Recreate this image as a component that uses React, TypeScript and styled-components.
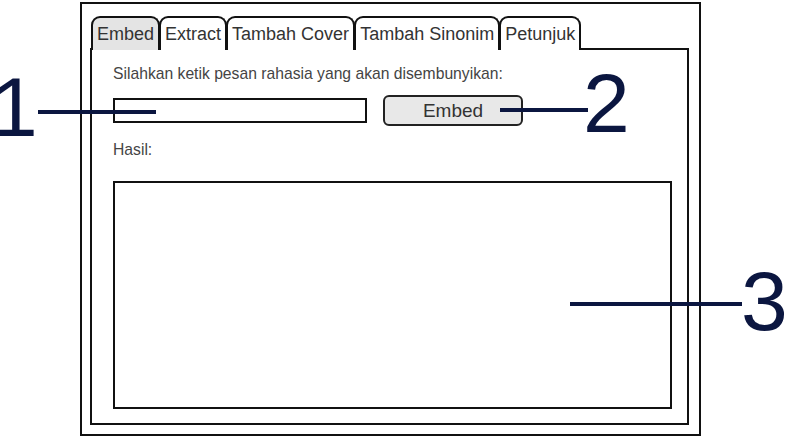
import styled, { createGlobalStyle } from "styled-components";

const ink = "#111";
const markColor = "#0b1640";
const tabs = ["Embed", "Extract", "Tambah Cover", "Tambah Sinonim", "Petunjuk"];

const GlobalStyle = createGlobalStyle`
  html, body {
    margin: 0;
    padding: 0;
    background: #fff;
    font-family: "Liberation Sans", Arial, sans-serif;
  }
`;

export default function App() {
  return (
    <Page>
      <GlobalStyle />
      <Frame>
        <TabBar>
          {tabs.map((t, i) => (
            <Tab key={t} $active={i === 0}>
              {t}
            </Tab>
          ))}
        </TabBar>
        <Panel>
          <Label>Silahkan ketik pesan rahasia yang akan disembunyikan:</Label>
          <InputRow>
            <MessageInput type="text" />
            <EmbedButton>Embed</EmbedButton>
          </InputRow>
          <ResultLabel>Hasil:</ResultLabel>
          <ResultArea />
        </Panel>
      </Frame>

      <Callout $x={38} $y={110} $w={118} />
      <Digit $x={-9} $y={65}>1</Digit>
      <Callout $x={500} $y={108} $w={88} />
      <Digit $x={583} $y={61}>2</Digit>
      <Callout $x={570} $y={302} $w={172} />
      <Digit $x={741} $y={259}>3</Digit>
    </Page>
  );
}

const Page = styled.div`
  position: relative;
  width: 785px;
  height: 439px;
  box-sizing: border-box;
  padding: 2px 0 0 80px;
  overflow: hidden;
`;

const Frame = styled.div`
  width: 621px;
  height: 434px;
  box-sizing: border-box;
  border: 2px solid ${ink};
  padding: 12px 10px 9px 8px;
  display: flex;
  flex-direction: column;
`;

const TabBar = styled.div`
  display: flex;
  margin: 0 0 -2px 1px;
  position: relative;
  z-index: 1;
`;

const Tab = styled.div<{ $active?: boolean }>`
  height: 34px;
  box-sizing: border-box;
  padding: 2px 4px 0;
  border: 2px solid ${ink};
  border-bottom: none;
  border-radius: 9px 9px 0 0;
  background: ${(p) => (p.$active ? "#e4e4e4" : "#fff")};
  color: #333;
  font-size: 18px;
  line-height: 28px;
  white-space: nowrap;
  & + & {
    margin-left: -1px;
  }
`;

const Panel = styled.div`
  flex: 1;
  border: 2px solid ${ink};
  padding: 15px 15px 14px 21px;
  display: flex;
  flex-direction: column;
`;

const Label = styled.div`
  color: #444;
  font-size: 15.7px;
  line-height: 18px;
`;

const InputRow = styled.div`
  display: flex;
  align-items: center;
  gap: 16px;
  margin-top: 12px;
`;

const MessageInput = styled.input`
  width: 254px;
  height: 25px;
  box-sizing: border-box;
  border: 2px solid ${ink};
  border-radius: 0;
  padding: 0 4px;
  margin: 0;
  outline: none;
  background: #fff;
`;

const EmbedButton = styled.button`
  width: 140px;
  height: 31px;
  box-sizing: border-box;
  border: 2px solid #222;
  border-radius: 6px;
  background: #e8e8e8;
  color: #333;
  font-family: "Liberation Sans", Arial, sans-serif;
  font-size: 19px;
  padding: 0;
  margin: 0;
`;

const ResultLabel = styled(Label)`
  margin-top: 15px;
`;

const ResultArea = styled.div`
  flex: 1;
  width: 559px;
  margin-top: 22px;
  box-sizing: border-box;
  border: 2px solid ${ink};
  background: #fff;
`;

const Callout = styled.div<{ $x: number; $y: number; $w: number }>`
  position: absolute;
  left: ${(p) => p.$x}px;
  top: ${(p) => p.$y}px;
  width: ${(p) => p.$w}px;
  height: 4px;
  background: ${markColor};
  z-index: 2;
`;

const Digit = styled.div<{ $x: number; $y: number }>`
  position: absolute;
  left: ${(p) => p.$x}px;
  top: ${(p) => p.$y}px;
  color: ${markColor};
  font-family: "Liberation Sans", Arial, sans-serif;
  font-size: 84px;
  line-height: 1;
  z-index: 2;
`;
